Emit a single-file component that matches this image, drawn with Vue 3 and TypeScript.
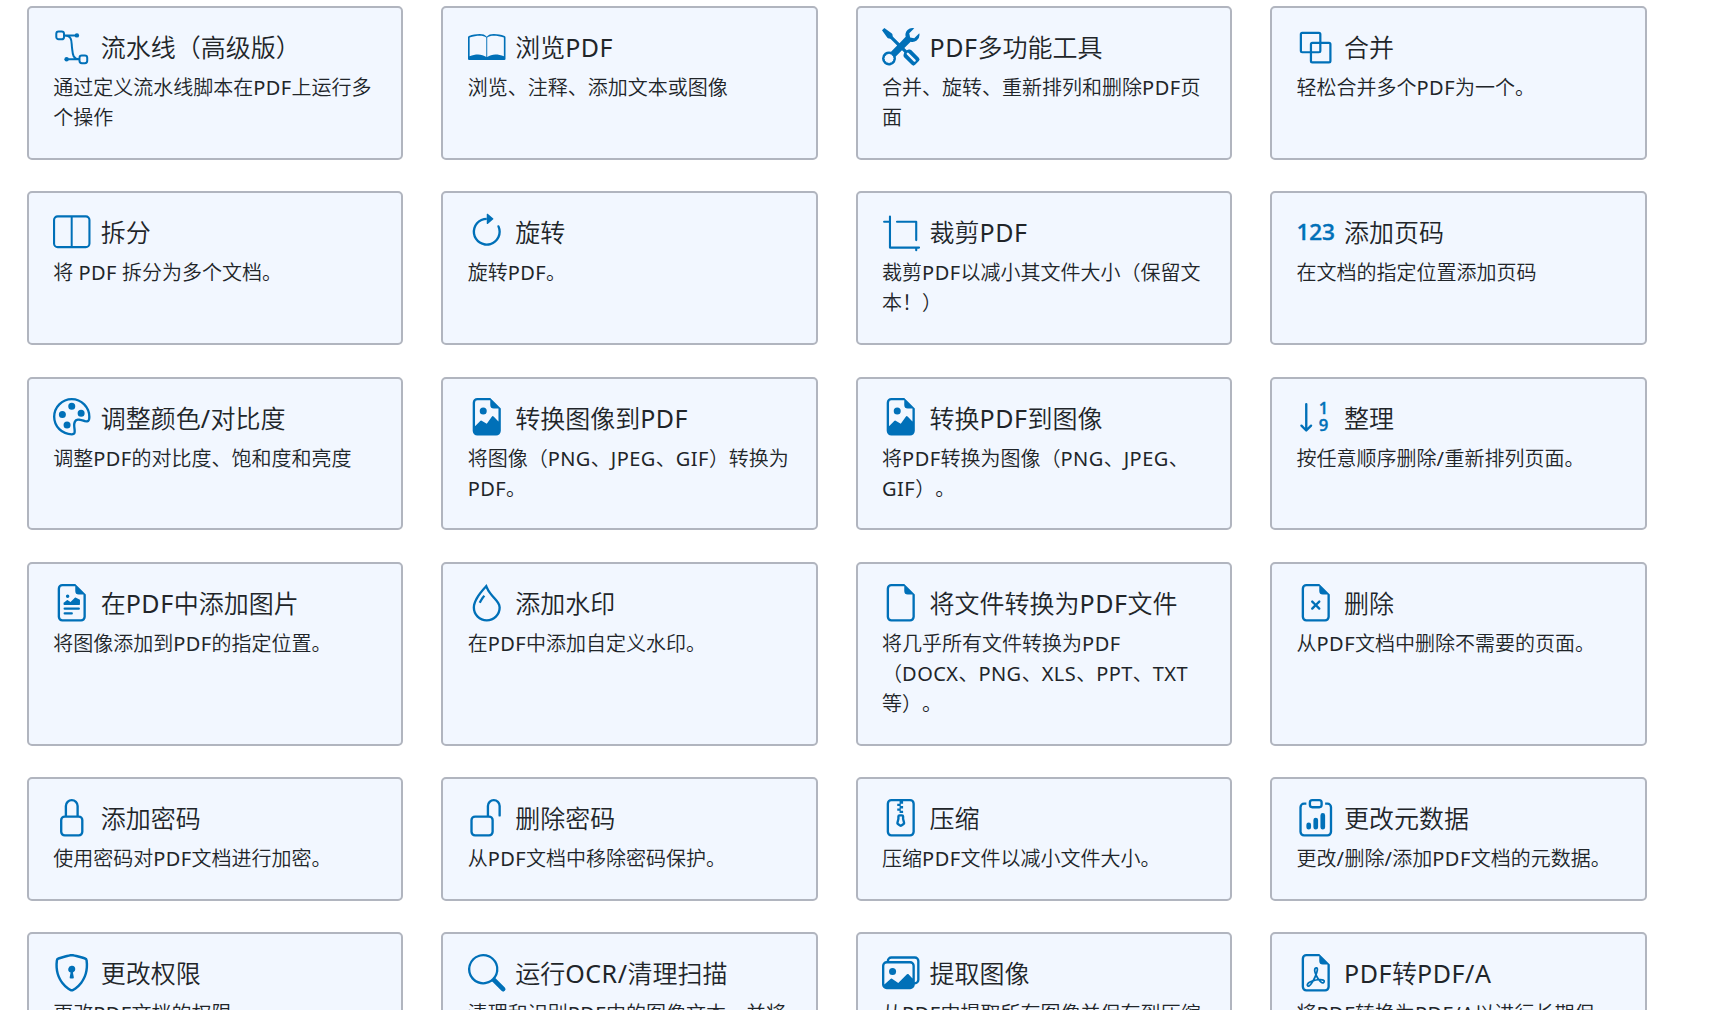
<script setup lang="ts">
interface Feature {
  icon: string
  title: string
  text: string
}

interface Run {
  text: string
  latin: boolean
}

const page =
  '<path d="M14 4.5V14a2 2 0 0 1-2 2H4a2 2 0 0 1-2-2V2a2 2 0 0 1 2-2h5.5zm-3 0A1.5 1.5 0 0 1 9.5 3V1H4a1 1 0 0 0-1 1v12a1 1 0 0 0 1 1h8a1 1 0 0 0 1-1V4.5z"/>'

const icons: Record<string, string> = {
  pipeline:
    '<g fill="none" stroke="currentColor" stroke-width=".85"><rect x="1.4" y="1.5" width="3.3" height="3.3" rx="1"/><rect x="11.3" y="11.7" width="3.3" height="3.3" rx="1"/><path d="M4.7 3.15H10M6 13.35h5.3M4.7 3.15c3.8 0 3.1 3 3.4 5.1s0 5.1 3.2 5.1"/></g><circle cx="10.2" cy="3.15" r=".95"/><circle cx="5.8" cy="13.35" r=".95"/>',
  book:
    '<path fill-rule="evenodd" d="M0 4Q0 3.6.4 3.4C2 2.9 3.4 2.6 5 2.6c1.3 0 2.3.3 3 1.1.7-.8 1.7-1.1 3-1.1 1.6 0 3 .3 4.6.8Q16 3.6 16 4v9.2Q16 13.6 15.5 13.6H.5Q0 13.6 0 13.2zM.7 4v8.1c2.6-1.1 5.2-1.1 7.1.3V4.1C6.5 2.9 3.5 3.2.7 4m7.5.1v8.3c1.9-1.4 4.5-1.4 7.1-.3V4c-2.8-.8-5.8-1.1-7.1.1"/>',
  tools:
    '<path d="M1 0 0 1l2.2 3.081a1 1 0 0 0 .815.419h.07a1 1 0 0 1 .708.293l2.675 2.675-2.617 2.654A3.003 3.003 0 0 0 0 13a3 3 0 1 0 5.878-.851l2.654-2.617.968.968-.305.914a1 1 0 0 0 .242 1.023l3.27 3.27a.997.997 0 0 0 1.414 0l1.586-1.586a.997.997 0 0 0 0-1.414l-3.27-3.27a1 1 0 0 0-1.023-.242L10.5 9.5l-.96-.96 2.68-2.643A3.005 3.005 0 0 0 16 3q0-.405-.102-.777l-2.14 2.141L12 4l-.364-1.757L13.777.102a3 3 0 0 0-3.675 3.68L7.462 6.46 4.793 3.793a1 1 0 0 1-.293-.707v-.071a1 1 0 0 0-.419-.814zm9.646 10.646a.5.5 0 0 1 .708 0l2.914 2.915a.5.5 0 0 1-.707.707l-2.915-2.914a.5.5 0 0 1 0-.708M3 11l.471.242.529.026.287.445.445.287.026.529L5 13l-.242.471-.026.529-.445.287-.287.445-.529.026L3 15l-.471-.242L2 14.732l-.287-.445L1.268 14l-.026-.529L1 13l.242-.471.026-.529.445-.287.287-.445.529-.026z"/>',
  merge:
    '<g fill="none" stroke="currentColor" stroke-width=".95"><rect x="1.65" y="2.05" width="8.3" height="8.3" rx=".6"/><rect x="5.95" y="6.35" width="8.3" height="8.3" rx=".6"/></g>',
  split:
    '<path d="M0 3a2 2 0 0 1 2-2h12a2 2 0 0 1 2 2v10a2 2 0 0 1-2 2H2a2 2 0 0 1-2-2zm8.4-1.1v12.2H14a1.1 1.1 0 0 0 1.1-1.1V3A1.1 1.1 0 0 0 14 1.9zm-.85 0H2A1.1 1.1 0 0 0 .9 3v10A1.1 1.1 0 0 0 2 14.1h5.55z"/>',
  rotate:
    '<path fill-rule="evenodd" d="M8 3a5 5 0 1 0 4.546 2.914.5.5 0 0 1 .908-.417A6 6 0 1 1 8 2z"/><path d="M8 4.466V.534a.25.25 0 0 1 .41-.192l2.36 1.966c.12.1.12.284 0 .384L8.41 4.658A.25.25 0 0 1 8 4.466"/>',
  crop:
    '<path fill="none" stroke="currentColor" stroke-width=".9" stroke-linecap="round" stroke-linejoin="round" d="M3.4 1.5v13.25h12.4M.9 3.75h2.5M6.4 3.75h8.2v7.8M14.6 14.75v1.1"/>',
  numbers:
    '<text x="-.2" y="11.4" font-family="Noto Sans, sans-serif" font-size="9.6" font-weight="500" stroke="currentColor" stroke-width=".2" textLength="16.4" lengthAdjust="spacing">123</text>',
  palette:
    '<path d="M8 5a1.5 1.5 0 1 0 0-3 1.5 1.5 0 0 0 0 3m4 3a1.5 1.5 0 1 0 0-3 1.5 1.5 0 0 0 0 3M5.5 7a1.5 1.5 0 1 1-3 0 1.5 1.5 0 0 1 3 0m.5 6a1.5 1.5 0 1 0 0-3 1.5 1.5 0 0 0 0 3"/><path d="M16 8c0 3.15-1.866 2.585-3.567 2.07C11.42 9.763 10.465 9.473 10 10c-.603.683-.475 1.819-.351 2.92C9.826 14.495 9.996 16 8 16a8 8 0 1 1 8-8m-8 7c.611 0 .654-.171.655-.176.078-.146.124-.464.07-1.119-.014-.168-.037-.37-.061-.591-.052-.464-.112-1.005-.118-1.462-.01-.707.083-1.61.704-2.314.369-.417.845-.578 1.272-.618.404-.038.812.026 1.16.104.343.077.702.186 1.025.284l.028.008c.346.105.658.199.953.266.653.148.904.083.991.024C14.717 9.38 15 9.161 15 8a7 7 0 1 0-7 7"/>',
  picture:
    '<path d="M6.502 7a1.5 1.5 0 1 0 0-3 1.5 1.5 0 0 0 0 3"/><path d="M14 14a2 2 0 0 1-2 2H4a2 2 0 0 1-2-2V2a2 2 0 0 1 2-2h5.5L14 4.5zM4 1a1 1 0 0 0-1 1v10l2.224-2.224a.5.5 0 0 1 .61-.075L8 11l2.157-3.02a.5.5 0 0 1 .76-.063L13 10V4.5h-2A1.5 1.5 0 0 1 9.5 3V1z"/>',
  sort:
    '<path fill="none" stroke="currentColor" stroke-linecap="round" stroke-linejoin="round" d="M3.95 2.6v11.1M1.9 11.8l2.05 2.05L6 11.8"/><g font-family="Noto Sans, sans-serif" font-size="7.1" font-weight="500" stroke="currentColor" stroke-width=".2" text-anchor="middle"><text x="11.3" y="7">1</text><text x="11.3" y="14">9</text></g>',
  richtext:
    page +
    '<path d="M4.5 12.5A.5.5 0 0 1 5 12h3a.5.5 0 0 1 0 1H5a.5.5 0 0 1-.5-.5m0-2A.5.5 0 0 1 5 10h6a.5.5 0 0 1 0 1H5a.5.5 0 0 1-.5-.5m1.639-3.708 1.33.886 1.854-1.855a.25.25 0 0 1 .289-.047l1.888.974V8.5a.5.5 0 0 1-.5.5H5a.5.5 0 0 1-.5-.5V8s1.54-1.274 1.639-1.208M6.25 6a.75.75 0 1 0 0-1.5.75.75 0 0 0 0 1.5"/>',
  droplet:
    '<path fill-rule="evenodd" d="M7.21.8C7.69.295 8 0 8 0q.164.544.371 1.038c.812 1.946 2.073 3.35 3.197 4.6C12.878 7.096 14 8.345 14 10a6 6 0 0 1-12 0C2 6.668 5.58 2.517 7.21.8m.413 1.021A31 31 0 0 0 5.794 3.99c-.726.95-1.436 2.008-1.96 3.07C3.304 8.133 3 9.138 3 10a5 5 0 0 0 10 0c0-1.201-.796-2.157-2.181-3.7l-.03-.032C9.75 5.11 8.5 3.72 7.623 1.82z"/><path d="M4.553 7.776c.82-1.641 1.717-2.753 2.093-3.13l.708.708c-.29.29-1.128 1.311-1.907 2.87z"/>',
  file: page,
  remove:
    page +
    '<path d="M6.854 7.146a.5.5 0 1 0-.708.708L7.293 9l-1.147 1.146a.5.5 0 0 0 .708.708L8 9.707l1.146 1.147a.5.5 0 0 0 .708-.708L8.707 9l1.147-1.146a.5.5 0 0 0-.708-.708L8 8.293z"/>',
  lock:
    '<path d="M8 1a2 2 0 0 1 2 2v4H6V3a2 2 0 0 1 2-2m3 6V3a3 3 0 0 0-6 0v4a2 2 0 0 0-2 2v5a2 2 0 0 0 2 2h6a2 2 0 0 0 2-2V9a2 2 0 0 0-2-2M5 8h6a1 1 0 0 1 1 1v5a1 1 0 0 1-1 1H5a1 1 0 0 1-1-1V9a1 1 0 0 1 1-1"/>',
  unlock:
    '<path d="M11 1a2 2 0 0 0-2 2v4a2 2 0 0 1 2 2v5a2 2 0 0 1-2 2H3a2 2 0 0 1-2-2V9a2 2 0 0 1 2-2h5V3a3 3 0 0 1 6 0v4a.5.5 0 0 1-1 0V3a2 2 0 0 0-2-2M3 8a1 1 0 0 0-1 1v5a1 1 0 0 0 1 1h6a1 1 0 0 0 1-1V9a1 1 0 0 0-1-1z"/>',
  zip:
    '<path d="M6.5 7.5a1 1 0 0 1 1-1h1a1 1 0 0 1 1 1v.938l.4 1.599a1 1 0 0 1-.416 1.074l-.93.62a1 1 0 0 1-1.109 0l-.93-.62a1 1 0 0 1-.415-1.074l.4-1.599zm2 0h-1v.938a1 1 0 0 1-.03.243l-.4 1.598.93.62.93-.62-.4-1.598a1 1 0 0 1-.03-.243z"/><path d="M2 2a2 2 0 0 1 2-2h8a2 2 0 0 1 2 2v12a2 2 0 0 1-2 2H4a2 2 0 0 1-2-2zm5.5-1H4a1 1 0 0 0-1 1v12a1 1 0 0 0 1 1h8a1 1 0 0 0 1-1V2a1 1 0 0 0-1-1H9v1H8v1h1v1H8v1h1v1H7.5V5h-1V4h1V3h-1V2h1z"/>',
  data:
    '<path d="M4 11a1 1 0 1 1 2 0v1a1 1 0 1 1-2 0zm6-4a1 1 0 1 1 2 0v5a1 1 0 1 1-2 0zM7 9a1 1 0 0 1 2 0v3a1 1 0 1 1-2 0z"/><path d="M4 1.5H3a2 2 0 0 0-2 2V14a2 2 0 0 0 2 2h10a2 2 0 0 0 2-2V3.5a2 2 0 0 0-2-2h-1v1h1a1 1 0 0 1 1 1V14a1 1 0 0 1-1 1H3a1 1 0 0 1-1-1V3.5a1 1 0 0 1 1-1h1z"/><path d="M9.5 1a.5.5 0 0 1 .5.5v1a.5.5 0 0 1-.5.5h-3a.5.5 0 0 1-.5-.5v-1a.5.5 0 0 1 .5-.5zm-3-1A1.5 1.5 0 0 0 5 1.5v1A1.5 1.5 0 0 0 6.5 4h3A1.5 1.5 0 0 0 11 2.5v-1A1.5 1.5 0 0 0 9.5 0z"/>',
  shield:
    '<path d="M5.338 1.59a61 61 0 0 0-2.837.856.48.48 0 0 0-.328.39c-.554 4.157.726 7.19 2.253 9.188a10.7 10.7 0 0 0 2.287 2.233c.346.244.652.42.893.533q.18.085.293.118a1 1 0 0 0 .101.025 1 1 0 0 0 .1-.025q.114-.034.294-.118c.24-.113.547-.29.893-.533a10.7 10.7 0 0 0 2.287-2.233c1.527-1.997 2.807-5.031 2.253-9.188a.48.48 0 0 0-.328-.39c-.651-.213-1.75-.56-2.837-.855C9.552 1.29 8.531 1.067 8 1.067c-.53 0-1.552.223-2.662.524zM5.072.56C6.157.265 7.31 0 8 0s1.843.265 2.928.56c1.11.3 2.229.655 2.887.87a1.54 1.54 0 0 1 1.044 1.262c.596 4.477-.787 7.795-2.465 9.99a11.8 11.8 0 0 1-2.517 2.453 7 7 0 0 1-1.048.625c-.28.132-.581.24-.829.24s-.548-.108-.829-.24a7 7 0 0 1-1.048-.625 11.8 11.8 0 0 1-2.517-2.453C1.928 10.487.545 7.169 1.141 2.692A1.54 1.54 0 0 1 2.185 1.43 63 63 0 0 1 5.072.56"/><path d="M9.5 6.5a1.5 1.5 0 0 1-1 1.415l.385 1.99a.5.5 0 0 1-.491.595h-.788a.5.5 0 0 1-.49-.595l.384-1.99a1.5 1.5 0 1 1 2-1.415"/>',
  search:
    '<path d="M11.742 10.344a6.5 6.5 0 1 0-1.397 1.398h-.001q.044.06.098.115l3.85 3.85a1 1 0 0 0 1.415-1.414l-3.85-3.85a1 1 0 0 0-.115-.1zM12 6.5a5.5 5.5 0 1 1-11 0 5.5 5.5 0 0 1 11 0"/>',
  images:
    '<path d="M4.502 9a1.5 1.5 0 1 0 0-3 1.5 1.5 0 0 0 0 3"/><path d="M14.002 13a2 2 0 0 1-2 2h-10a2 2 0 0 1-2-2V5A2 2 0 0 1 2 3a2 2 0 0 1 2-2h10a2 2 0 0 1 2 2v8a2 2 0 0 1-1.998 2M14 2H4a1 1 0 0 0-1 1h9.002a2 2 0 0 1 2 2v7A1 1 0 0 0 15 11V3a1 1 0 0 0-1-1M2.002 4a1 1 0 0 0-1 1v8l2.646-2.354a.5.5 0 0 1 .63-.062l2.66 1.773 3.71-3.71a.5.5 0 0 1 .577-.094l1.777 1.947V5a1 1 0 0 0-1-1z"/>',
  pdf:
    page +
    '<path d="M4.603 14.087a.8.8 0 0 1-.438-.42c-.195-.388-.13-.776.08-1.102.198-.307.526-.568.897-.787a7.7 7.7 0 0 1 1.482-.645 20 20 0 0 0 1.062-2.227 7.3 7.3 0 0 1-.43-1.295c-.086-.4-.119-.796-.046-1.136.075-.354.274-.672.65-.823.192-.077.4-.12.602-.077a.7.7 0 0 1 .477.365c.088.164.12.356.127.538.007.188-.012.396-.047.614-.084.51-.27 1.134-.52 1.794a11 11 0 0 0 .98 1.686 5.8 5.8 0 0 1 1.334.05c.364.066.734.195.96.465.12.144.193.32.2.518.007.192-.047.382-.138.563a1.04 1.04 0 0 1-.354.416.86.86 0 0 1-.51.138c-.331-.014-.654-.196-.933-.417a5.7 5.7 0 0 1-.911-.95 11.7 11.7 0 0 0-1.997.406 11.3 11.3 0 0 1-1.02 1.51c-.292.35-.609.656-.927.787a.8.8 0 0 1-.58.029m1.379-1.901q-.25.115-.459.238c-.328.194-.541.383-.647.547-.094.145-.096.25-.04.361q.016.032.026.044l.035-.012c.137-.056.355-.235.635-.572a8 8 0 0 0 .45-.606m1.64-1.33a13 13 0 0 1 1.01-.193 12 12 0 0 1-.51-.858 21 21 0 0 1-.5 1.05zm2.446.45q.226.245.435.41c.24.19.407.253.498.256a.1.1 0 0 0 .07-.015.3.3 0 0 0 .094-.125.44.44 0 0 0 .059-.2.1.1 0 0 0-.026-.063c-.052-.062-.2-.152-.518-.209a4 4 0 0 0-.612-.053zM8.078 7.8a7 7 0 0 0 .2-.828q.046-.282.038-.465a.6.6 0 0 0-.032-.198.5.5 0 0 0-.145.04c-.087.035-.158.106-.196.283-.04.192-.03.469.046.822q.036.167.09.346z"/>',
}

const features: Feature[] = [
  { icon: 'pipeline', title: '流水线（高级版）', text: '通过定义流水线脚本在PDF上运行多个操作' },
  { icon: 'book', title: '浏览PDF', text: '浏览、注释、添加文本或图像' },
  { icon: 'tools', title: 'PDF多功能工具', text: '合并、旋转、重新排列和删除PDF页面' },
  { icon: 'merge', title: '合并', text: '轻松合并多个PDF为一个。' },
  { icon: 'split', title: '拆分', text: '将 PDF 拆分为多个文档。' },
  { icon: 'rotate', title: '旋转', text: '旋转PDF。' },
  { icon: 'crop', title: '裁剪PDF', text: '裁剪PDF以减小其文件大小（保留文本！）' },
  { icon: 'numbers', title: '添加页码', text: '在文档的指定位置添加页码' },
  { icon: 'palette', title: '调整颜色/对比度', text: '调整PDF的对比度、饱和度和亮度' },
  { icon: 'picture', title: '转换图像到PDF', text: '将图像（PNG、JPEG、GIF）转换为PDF。' },
  { icon: 'picture', title: '转换PDF到图像', text: '将PDF转换为图像（PNG、JPEG、GIF）。' },
  { icon: 'sort', title: '整理', text: '按任意顺序删除/重新排列页面。' },
  { icon: 'richtext', title: '在PDF中添加图片', text: '将图像添加到PDF的指定位置。' },
  { icon: 'droplet', title: '添加水印', text: '在PDF中添加自定义水印。' },
  { icon: 'file', title: '将文件转换为PDF文件', text: '将几乎所有文件转换为PDF（DOCX、PNG、XLS、PPT、TXT等）。' },
  { icon: 'remove', title: '删除', text: '从PDF文档中删除不需要的页面。' },
  { icon: 'lock', title: '添加密码', text: '使用密码对PDF文档进行加密。' },
  { icon: 'unlock', title: '删除密码', text: '从PDF文档中移除密码保护。' },
  { icon: 'zip', title: '压缩', text: '压缩PDF文件以减小文件大小。' },
  { icon: 'data', title: '更改元数据', text: '更改/删除/添加PDF文档的元数据。' },
  { icon: 'shield', title: '更改权限', text: '更改PDF文档的权限。' },
  { icon: 'search', title: '运行OCR/清理扫描', text: '清理和识别PDF中的图像文本，并将其转换为文本。' },
  { icon: 'images', title: '提取图像', text: '从PDF中提取所有图像并保存到压缩包中。' },
  { icon: 'pdf', title: 'PDF转PDF/A', text: '将PDF转换为PDF/A以进行长期保存。' },
]

// Latin runs get their own weight and tracking, so split them from the Chinese text.
function runs(value: string): Run[] {
  return value
    .split(/([A-Za-z/]+)/)
    .filter((part) => part !== '')
    .map((part) => ({ text: part, latin: /^[A-Za-z/]/.test(part) }))
}
</script>

<template>
  <main class="features" lang="zh-CN">
    <a v-for="feature in features" :key="feature.title" class="card">
      <header class="head">
        <svg class="icon" viewBox="0 0 16 16" fill="currentColor" aria-hidden="true" v-html="icons[feature.icon]"></svg>
        <h2 class="title"><span v-for="(run, i) in runs(feature.title)" :key="i" :class="{ latin: run.latin }">{{ run.text }}</span></h2>
      </header>
      <p class="text"><span v-for="(run, i) in runs(feature.text)" :key="i" :class="{ latin: run.latin }">{{ run.text }}</span></p>
    </a>
  </main>
</template>

<style>
html,
body {
  margin: 0;
  background: #fff;
  overflow: hidden;
}
</style>

<style scoped>
.features {
  box-sizing: border-box;
  width: 1728px;
  height: 1010px;
  overflow: hidden;
  padding: 5.95px 81.3px 0 26.7px;
  display: grid;
  grid-template-columns: repeat(4, minmax(0, 1fr));
  grid-auto-rows: max-content;
  column-gap: 37.8px;
  row-gap: 31.3px;
  color: #212529;
  font-family: "Noto Sans", "Noto Sans CJK SC", sans-serif;
  font-weight: 350;
  text-spacing-trim: space-all;
}

.card {
  box-sizing: border-box;
  padding: 24.15px 24.5px 24.85px 24.5px;
  border: 2px solid #b1b5bf;
  border-radius: 5px;
  background: #f2f7ff;
}

.head {
  display: flex;
  align-items: flex-start;
  gap: 9.7px;
  height: 41px;
}

.icon {
  flex: none;
  width: 37.5px;
  height: 37.5px;
  margin: -4.3px 0 0 0.3px;
  overflow: visible;
  color: #0070b8;
}

.title {
  margin: 0;
  font-size: 25px;
  line-height: 30px;
  font-weight: 350;
  white-space: nowrap;
}

.text {
  margin: 0;
  font-size: 20px;
  line-height: 30px;
}

.latin {
  font-weight: 400;
  letter-spacing: 0.022em;
}
</style>
